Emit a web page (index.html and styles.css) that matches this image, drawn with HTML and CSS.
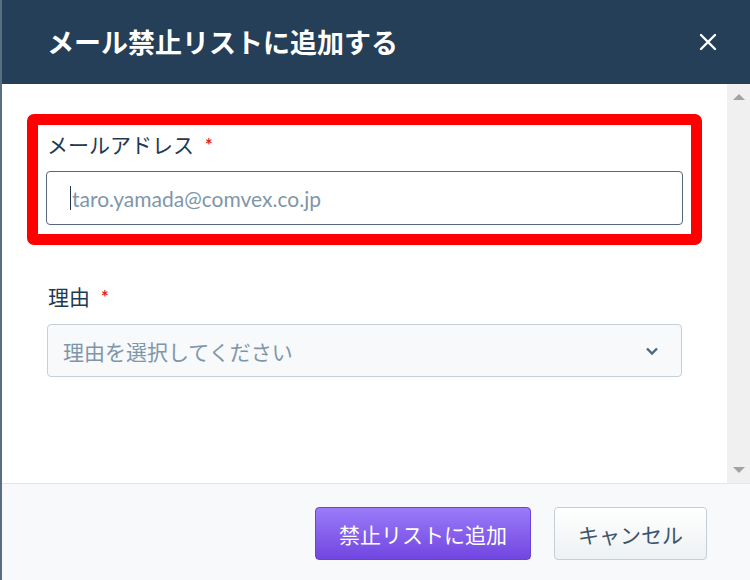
FILE: index.html
```html
<!DOCTYPE html>
<html lang="ja">
<head>
    <meta charset="UTF-8">
    <meta name="viewport" content="width=device-width, initial-scale=1.0">
    <title>メール禁止リストに追加する</title>
    <link rel="stylesheet" href="styles.css">
</head>
<body>
    <div class="modal">
        <div class="modal-header">
            <h1>メール禁止リストに追加する</h1>
            <button class="close-button" aria-label="閉じる">
                <svg width="18" height="18" viewBox="0 0 18 18">
                    <path d="M2 2 L16 16 M16 2 L2 16" stroke="#fff" stroke-width="2.4" stroke-linecap="round"/>
                </svg>
            </button>
        </div>
        <div class="modal-body">
            <div class="modal-content">
                <!-- 注目枠 -->
                <div class="highlight">
                    <label class="field-label">メールアドレス<span class="required">*</span></label>
                    <div class="text-input"><span class="caret"></span><span class="placeholder">taro.yamada@comvex.co.jp</span></div>
                </div>
                <div class="field">
                    <label class="field-label">理由<span class="required">*</span></label>
                    <div class="select-input">
                        <span class="placeholder">理由を選択してください</span>
                        <svg width="14" height="10" viewBox="0 0 14 10">
                            <path d="M2 2.5 L7 7.5 L12 2.5" fill="none" stroke="#4d677f" stroke-width="2.4"/>
                        </svg>
                    </div>
                </div>
            </div>
            <div class="scrollbar">
                <span class="arrow-up"></span>
                <span class="arrow-down"></span>
            </div>
        </div>
        <div class="modal-footer">
            <button class="add-button">禁止リストに追加</button>
            <button class="cancel-button">キャンセル</button>
        </div>
    </div>
</body>
</html>
```

FILE: styles.css
```css
body {
    margin: 0;
    padding: 0;
    background-color: #5a6e82;
    font-family: Lato, "Noto Sans CJK JP", sans-serif;
    height: 580px;
    overflow: hidden;
}
.modal {
    margin-left: 2px;
    height: 580px;
    display: flex;
    flex-direction: column;
    background: white;
}
.modal-header {
    height: 84px;
    flex-shrink: 0;
    background-color: #243f57;
    display: flex;
    align-items: center;
    justify-content: space-between;
    padding: 0 33px 0 45px;
}
.modal-header h1 {
    margin: 0;
    font-size: 27px;
    font-weight: bold;
    color: white;
    position: relative;
    top: -1px;
}
.close-button {
    background: none;
    border: none;
    padding: 0;
    cursor: pointer;
    display: flex;
}
.modal-body {
    height: 399px;
    display: flex;
}
.modal-content {
    flex: 1;
    padding: 30px 45px 0 45px;
}
.highlight {
    margin: 0 -20px;
    border: 11px solid #ff0000;
    border-radius: 7px;
    padding: 6px 8px 9px 8px;
}
.field {
    margin-top: 38px;
}
.field-label {
    display: block;
    font-size: 21px;
    line-height: 28px;
    color: #1f3a52;
    margin-bottom: 12px;
    padding-left: 1px;
}
.field .field-label {
    margin-bottom: 13px;
}
.required {
    color: #e0232b;
    font-size: 18px;
    font-weight: bold;
    line-height: 0;
    margin-left: 11px;
    position: relative;
    top: -1px;
}
.text-input {
    height: 54px;
    box-sizing: border-box;
    border: 1px solid #55697b;
    border-radius: 4px;
    display: flex;
    align-items: center;
    padding-left: 23px;
}
.caret {
    width: 1px;
    height: 24px;
    background: #1f3a52;
    margin-right: 1px;
}
.placeholder {
    font-size: 21px;
    color: #7f96aa;
}
.select-input {
    height: 53px;
    box-sizing: border-box;
    border: 1px solid #c4cfd8;
    border-radius: 4px;
    background: #f7f9fb;
    display: flex;
    align-items: center;
    justify-content: space-between;
    padding: 0 22px 0 15px;
}
.scrollbar {
    width: 23px;
    background: #f0f0f0;
    display: flex;
    flex-direction: column;
    justify-content: space-between;
    align-items: center;
    padding: 10px 0;
    box-sizing: border-box;
}
.arrow-up {
    width: 0;
    height: 0;
    border-left: 6px solid transparent;
    border-right: 6px solid transparent;
    border-bottom: 6px solid #a3a3a3;
}
.arrow-down {
    width: 0;
    height: 0;
    border-left: 6px solid transparent;
    border-right: 6px solid transparent;
    border-top: 6px solid #a3a3a3;
}
.modal-footer {
    flex: 1;
    background: #f8f9fb;
    border-top: 1px solid #e2e6ea;
    display: flex;
    justify-content: flex-end;
    align-items: flex-start;
    gap: 23px;
    padding: 23px 43px 0 0;
}
.add-button, .cancel-button {
    height: 53px;
    border-radius: 4px;
    font-family: Lato, "Noto Sans CJK JP", sans-serif;
    font-size: 21px;
    cursor: pointer;
}
.add-button {
    width: 216px;
    background: linear-gradient(#9b7bf8, #7146e1);
    border: 1px solid #6a42d9;
    color: white;
}
.cancel-button {
    width: 153px;
    background: linear-gradient(#ffffff, #edf1f3);
    border: 1px solid #c3ced6;
    color: #3d5467;
}
```
